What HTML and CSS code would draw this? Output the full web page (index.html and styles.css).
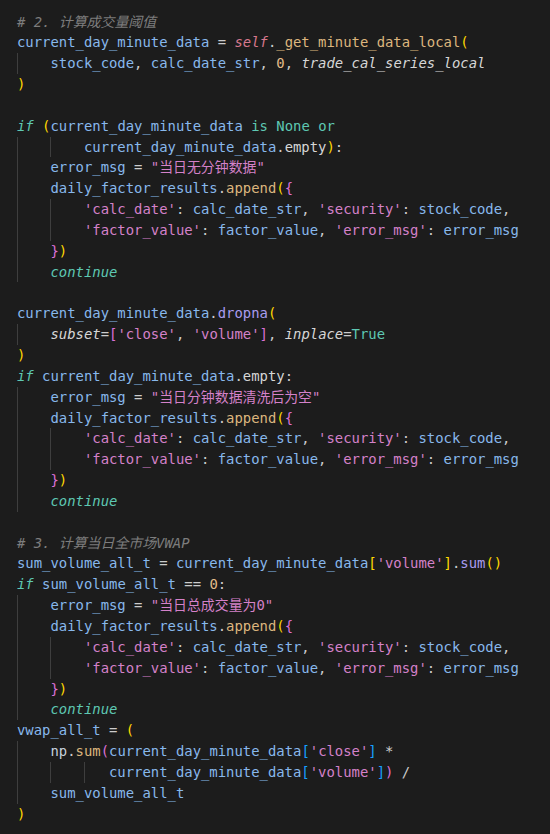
FILE: index.html
```html
<!DOCTYPE html>
<html lang="zh">
<head>
<meta charset="utf-8">
<link rel="stylesheet" href="styles.css">
</head>
<body>
<div class="code">
<div class="ln"><span class="c"># 2. 计算成交量阈值</span></div>
<div class="ln"><span class="v">current_day_minute_data</span> = <span class="sf">self</span>.<span class="f">_get_minute_data_local</span><span class="b1">(</span></div>
<div class="ln"><span class="ig">    </span><span class="v">stock_code</span>, <span class="v">calc_date_str</span>, <span class="n">0</span>, <span class="p">trade_cal_series_local</span></div>
<div class="ln"><span class="b1">)</span></div>
<div class="ln"> </div>
<div class="ln"><span class="k">if</span> <span class="b1">(</span><span class="v">current_day_minute_data</span> <span class="kn">is</span> <span class="kn">None</span> <span class="kn">or</span></div>
<div class="ln"><span class="ig">    </span><span class="ig">    </span><span class="v">current_day_minute_data</span>.<span class="a">empty</span><span class="b1">)</span>:</div>
<div class="ln"><span class="ig">    </span><span class="v">error_msg</span> = <span class="s">"当日无分钟数据"</span></div>
<div class="ln"><span class="ig">    </span><span class="v">daily_factor_results</span>.<span class="f">append</span><span class="b1">(</span><span class="b2">{</span></div>
<div class="ln"><span class="ig">    </span><span class="ig">    </span><span class="s">'calc_date'</span>: <span class="v">calc_date_str</span>, <span class="s">'security'</span>: <span class="v">stock_code</span>,</div>
<div class="ln"><span class="ig">    </span><span class="ig">    </span><span class="s">'factor_value'</span>: <span class="v">factor_value</span>, <span class="s">'error_msg'</span>: <span class="v">error_msg</span></div>
<div class="ln"><span class="ig">    </span><span class="b2">}</span><span class="b1">)</span></div>
<div class="ln"><span class="ig">    </span><span class="k">continue</span></div>
<div class="ln"> </div>
<div class="ln"><span class="v">current_day_minute_data</span>.<span class="m">dropna</span><span class="b1">(</span></div>
<div class="ln"><span class="ig">    </span><span class="p">subset</span>=<span class="b2">[</span><span class="s">'close'</span>, <span class="s">'volume'</span><span class="b2">]</span>, <span class="p">inplace</span>=<span class="kn">True</span></div>
<div class="ln"><span class="b1">)</span></div>
<div class="ln"><span class="k">if</span> <span class="v">current_day_minute_data</span>.<span class="a">empty</span>:</div>
<div class="ln"><span class="ig">    </span><span class="v">error_msg</span> = <span class="s">"当日分钟数据清洗后为空"</span></div>
<div class="ln"><span class="ig">    </span><span class="v">daily_factor_results</span>.<span class="f">append</span><span class="b1">(</span><span class="b2">{</span></div>
<div class="ln"><span class="ig">    </span><span class="ig">    </span><span class="s">'calc_date'</span>: <span class="v">calc_date_str</span>, <span class="s">'security'</span>: <span class="v">stock_code</span>,</div>
<div class="ln"><span class="ig">    </span><span class="ig">    </span><span class="s">'factor_value'</span>: <span class="v">factor_value</span>, <span class="s">'error_msg'</span>: <span class="v">error_msg</span></div>
<div class="ln"><span class="ig">    </span><span class="b2">}</span><span class="b1">)</span></div>
<div class="ln"><span class="ig">    </span><span class="k">continue</span></div>
<div class="ln"> </div>
<div class="ln"><span class="c"># 3. 计算当日全市场VWAP</span></div>
<div class="ln"><span class="v">sum_volume_all_t</span> = <span class="v">current_day_minute_data</span><span class="b1">[</span><span class="s">'volume'</span><span class="b1">]</span>.<span class="m">sum</span><span class="b1">()</span></div>
<div class="ln"><span class="k">if</span> <span class="v">sum_volume_all_t</span> == <span class="n">0</span>:</div>
<div class="ln"><span class="ig">    </span><span class="v">error_msg</span> = <span class="s">"当日总成交量为0"</span></div>
<div class="ln"><span class="ig">    </span><span class="v">daily_factor_results</span>.<span class="f">append</span><span class="b1">(</span><span class="b2">{</span></div>
<div class="ln"><span class="ig">    </span><span class="ig">    </span><span class="s">'calc_date'</span>: <span class="v">calc_date_str</span>, <span class="s">'security'</span>: <span class="v">stock_code</span>,</div>
<div class="ln"><span class="ig">    </span><span class="ig">    </span><span class="s">'factor_value'</span>: <span class="v">factor_value</span>, <span class="s">'error_msg'</span>: <span class="v">error_msg</span></div>
<div class="ln"><span class="ig">    </span><span class="b2">}</span><span class="b1">)</span></div>
<div class="ln"><span class="ig">    </span><span class="k">continue</span></div>
<div class="ln"><span class="v">vwap_all_t</span> = <span class="b1">(</span></div>
<div class="ln"><span class="ig">    </span><span class="mod">np</span>.<span class="f">sum</span><span class="b2">(</span><span class="v">current_day_minute_data</span><span class="b3">[</span><span class="s">'close'</span><span class="b3">]</span> *</div>
<div class="ln"><span class="ig">    </span><span class="ig">    </span><span class="ig">   </span><span class="v">current_day_minute_data</span><span class="b3">[</span><span class="s">'volume'</span><span class="b3">]</span><span class="b2">)</span> /</div>
<div class="ln"><span class="ig">    </span><span class="v">sum_volume_all_t</span></div>
<div class="ln"><span class="b1">)</span></div>
</div>
</body>
</html>
```
FILE: styles.css
```css
html, body {
  margin: 0;
  padding: 0;
  background: #1c1c1c;
}
.code {
  padding: 11.5px 0 0 17px;
  font-family: "DejaVu Sans Mono", "Noto Sans CJK SC", monospace;
  font-size: 13.9px;
  line-height: 20.85px;
  color: #cccccc;
}
.ln {
  height: 20.85px;
  white-space: pre;
}
.ig {
  display: inline-block;
  height: 20.85px;
  vertical-align: top;
  box-shadow: inset 1px 0 0 #3e3e3e;
}
.c { color: #7d7d7d; font-style: italic; }
.v { color: #88b8ec; }
.k { color: #5ec8b3; font-style: italic; }
.kn { color: #5ec8b3; }
.s { color: #d481c9; }
.f { color: #dcb67e; }
.m { color: #a99df0; }
.sf { color: #d6788d; font-style: italic; }
.p { color: #d6d6d6; font-style: italic; }
.n { color: #e4bd8a; }
.a { color: #d6d6d6; }
.mod { color: #c6d2de; }
.b1 { color: #ffd700; }
.b2 { color: #da70d6; }
.b3 { color: #179fff; }
```
